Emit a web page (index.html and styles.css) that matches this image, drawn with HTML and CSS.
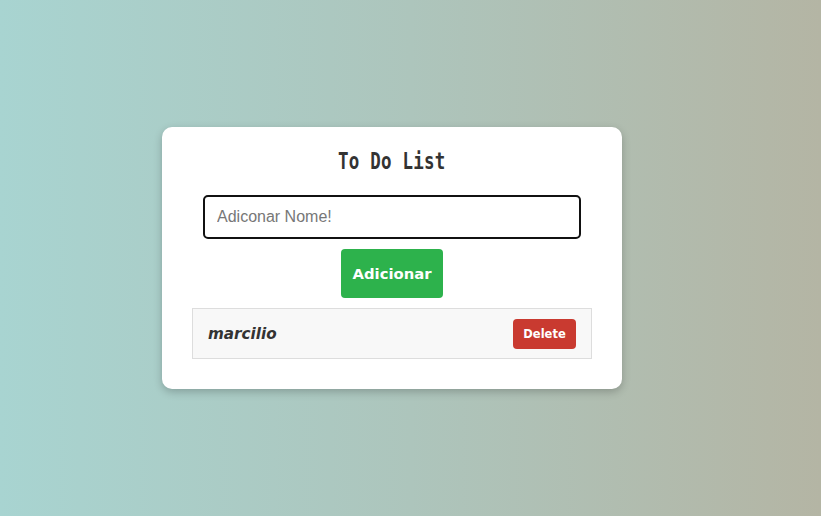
FILE: index.html
```html
<!DOCTYPE html>
<html lang="pt">
<head>
<meta charset="utf-8">
<title>To Do List</title>
<link rel="stylesheet" href="styles.css">
</head>
<body>
<main class="card">
  <h1 class="title"><span class="title-text">To Do List</span></h1>
  <div class="form">
    <input class="input" type="text" placeholder="Adiconar Nome!">
    <button class="add-btn">Adicionar</button>
  </div>
  <ul class="list">
    <li class="item">
      <span class="item-name">marcilio</span>
      <button class="del-btn">Delete</button>
    </li>
  </ul>
</main>
</body>
</html>
```
FILE: styles.css
```css
html, body {
  margin: 0;
  height: 100%;
}
body {
  background: linear-gradient(to right, #a8d4d1 0%, #adc5bc 50%, #b4b5a4 100%);
  display: flex;
  justify-content: center;
  align-items: flex-start;
  font-family: "DejaVu Sans", sans-serif;
}
.card {
  margin-top: 127px;
  margin-right: 37px;
  width: 460px;
  box-sizing: border-box;
  background: #fff;
  border-radius: 10px;
  box-shadow: 0 3px 8px rgba(0, 0, 0, 0.22);
  padding: 18px 30px 30px;
}
.title {
  margin: 0;
  text-align: center;
  height: 27px;
  line-height: 27px;
}
.title-text {
  display: inline-block;
  font-family: "DejaVu Sans Mono", monospace;
  font-weight: bold;
  font-size: 23px;
  color: #333;
  transform: scaleX(0.76);
  letter-spacing: 0.3px;
}
.form {
  display: flex;
  flex-direction: column;
  align-items: center;
  margin-top: 23px;
  gap: 10px;
}
.input {
  width: 378px;
  height: 44px;
  box-sizing: border-box;
  border: 2px solid #111;
  border-radius: 5px;
  padding: 0 12px;
  font-family: "Liberation Sans", Arial, sans-serif;
  font-size: 16px;
  color: #333;
  outline: none;
}
.input::placeholder {
  color: #777;
}
.add-btn {
  width: 102px;
  height: 49px;
  border: none;
  border-radius: 4px;
  background: #2db24c;
  color: #fff;
  font-family: "DejaVu Sans", sans-serif;
  font-weight: bold;
  font-size: 14.8px;
  padding: 0;
}
.list {
  list-style: none;
  margin: 10px 0 0;
  padding: 0;
}
.item {
  display: flex;
  align-items: center;
  justify-content: space-between;
  height: 51px;
  box-sizing: border-box;
  background: #f8f8f8;
  border: 1px solid #ddd;
  padding: 0 15px 0 15px;
}
.item-name {
  font-family: "DejaVu Sans", sans-serif;
  font-weight: bold;
  font-style: italic;
  font-size: 15.2px;
  color: #333;
}
.del-btn {
  width: 63px;
  height: 30px;
  border: none;
  border-radius: 4px;
  background: #c93a30;
  color: #fff;
  font-family: "DejaVu Sans", sans-serif;
  font-weight: bold;
  font-size: 11.5px;
  padding: 0;
}
```
